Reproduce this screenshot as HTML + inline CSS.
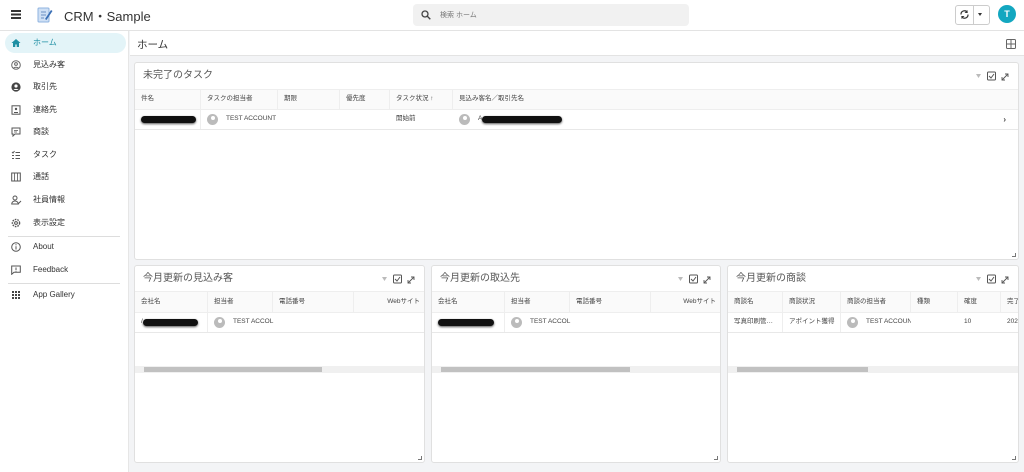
<!DOCTYPE html>
<html><head><meta charset="utf-8"><style>
*{box-sizing:border-box;margin:0;padding:0}
body{width:1024px;height:472px;overflow:hidden;background:#f3f4f6;font-family:"Liberation Sans","Noto Sans CJK JP",sans-serif;color:#333;position:relative}
.abs{position:absolute}
.top{left:0;top:0;width:1024px;height:31px;background:#fff;border-bottom:1px solid #e3e3e3}
.side{left:0;top:31px;width:129px;height:441px;background:#fff;border-right:1px solid #e6e6e6}
.item{position:absolute;left:5px;width:121px;height:20px;font-size:8px;color:#333;line-height:20px;padding-left:28px}
.item svg{position:absolute;left:6px;top:5px}
.sel{background:#e3f4f8;border-radius:10px;color:#1e8fa3}
.card{position:absolute;background:#fff;border:1px solid #e0e0e0;border-radius:3px;overflow:hidden}
.ct{position:absolute;left:8px;top:6px;font-size:10px;color:#555;line-height:14px}
.tools{position:absolute;right:6px;top:8px;width:40px;height:10px}
.hd,.rw{position:absolute;left:0;right:0;font-size:6.5px;color:#444;line-height:1}
.hd{background:#fafafa;border-top:1px solid #eee;border-bottom:1px solid #eee}
.rw{border-bottom:1px solid #e8e8e8}
.c{position:absolute;top:0;height:100%;padding-left:6px;border-right:1px solid #eee;display:flex;align-items:center;white-space:nowrap;overflow:hidden}
.blk{display:inline-block;height:7px;border-radius:4px;background:#111;box-shadow:0 1px 2px #555}
.av{display:inline-block;width:11px;height:11px;border-radius:50%;background:#bbb;margin-right:8px;position:relative;flex:none}
.av::after{content:"";position:absolute;left:3.5px;top:2px;width:4px;height:4px;border-radius:50%;background:#fff}
.sb{position:absolute;left:0;right:0;height:7px;background:#f0f0f0}
.sb i{position:absolute;top:1px;height:5px;background:#c1c1c1}
.rs{position:absolute;right:2px;bottom:2px;width:4px;height:4px;border-right:1px solid #777;border-bottom:1px solid #777}
</style></head><body>
<svg width="0" height="0" style="position:absolute"><defs><g id="tl"><path d="M4 3h5l-2.5 4z" fill="#bbb"/><rect x="15.5" y="1" width="8" height="8" rx="1" fill="none" stroke="#555"/><path d="M17 5l2 2 3-4" fill="none" stroke="#555"/><path d="M30 9l6-6M33 3h3v3M30 6v3h3" fill="none" stroke="#555" stroke-width=".9"/></g></defs></svg>
<div class="abs top">
 <div class="abs" style="left:11px;top:10px;width:10px;height:1.5px;background:#333;box-shadow:0 3.5px 0 #333,0 7px 0 #333"></div>
 <svg class="abs" style="left:37px;top:6px" width="16" height="18" viewBox="0 0 16 18"><rect x="1" y="2" width="11" height="14" rx="1" fill="#cfe0f5" stroke="#8fb3e0"/><path d="M4 6h5M4 9h5M4 12h3" stroke="#6b8fc4"/><path d="M8 13l6-9 1.5 1-6 9z" fill="#3a6fb5"/></svg>
 <div class="abs" style="left:64px;top:6px;font-size:13px;color:#333">CRM・Sample</div>
 <div class="abs" style="left:413px;top:4px;width:276px;height:22px;background:#f1f1f1;border-radius:4px"></div>
 <svg class="abs" style="left:421px;top:10px" width="10" height="10"><circle cx="4" cy="4" r="3" fill="none" stroke="#444" stroke-width="1.3"/><path d="M6.3 6.3l3 3" stroke="#444" stroke-width="1.4"/></svg>
 <div class="abs" style="left:440px;top:10px;font-size:7px;color:#777">検索 ホーム</div>
 <div class="abs" style="left:955px;top:5px;width:35px;height:20px;border:1px solid #ccc;border-radius:3px"></div>
 <div class="abs" style="left:973px;top:5px;width:1px;height:20px;background:#ccc"></div>
 <svg class="abs" style="left:959px;top:9px" width="11" height="11"><path d="M2 5.5A3.5 3.5 0 0 1 8.5 3.5M9 5.5A3.5 3.5 0 0 1 2.5 7.5" fill="none" stroke="#333" stroke-width="1.2"/><path d="M8.5 1v3h-3z M2.5 10v-3h3z" fill="#333"/></svg>
 <div class="abs" style="left:978px;top:13px;border:2.5px solid transparent;border-top:3px solid #333"></div>
 <div class="abs" style="left:998px;top:5px;width:18px;height:18px;border-radius:50%;background:#13a7c0;color:#fff;font-size:9px;font-weight:bold;text-align:center;line-height:18px">T</div>
</div>
<div class="abs side">
 <div class="item sel" style="top:2px"><svg width="10" height="10"><path d="M5 1L0.5 5h1.5v4h2.3V6.5h1.4V9H8V5h1.5z" fill="#1e8fa3"/></svg>ホーム</div>
 <div class="item" style="top:24px"><svg width="10" height="10"><circle cx="5" cy="5" r="4.3" fill="none" stroke="#666"/><circle cx="5" cy="4" r="1.4" fill="none" stroke="#666"/><path d="M2.6 8a3 2 0 0 1 4.8 0" fill="none" stroke="#666"/></svg>見込み客</div>
 <div class="item" style="top:46px"><svg width="10" height="10"><circle cx="5" cy="5" r="4.6" fill="#444"/><circle cx="5" cy="4" r="1.6" fill="#fff"/><path d="M2.4 8a3 2.2 0 0 1 5.2 0z" fill="#fff"/></svg>取引先</div>
 <div class="item" style="top:69px"><svg width="10" height="10"><rect x="1" y="0.8" width="8" height="8.4" fill="none" stroke="#555"/><circle cx="5" cy="4" r="1.2" fill="#555"/><path d="M3 7.5h4" stroke="#555"/></svg>連絡先</div>
 <div class="item" style="top:91px"><svg width="10" height="10"><path d="M1 1h8v6H4L2 9V7H1z" fill="none" stroke="#555"/><path d="M3 3.5h4M3 5h3" stroke="#555" stroke-width=".8"/></svg>商談</div>
 <div class="item" style="top:114px"><svg width="10" height="10"><path d="M1 2l1 1 1.5-2M1 5.5h2M1 8.5h2M4.5 2.5H9M4.5 5.5H9M4.5 8.5H9" fill="none" stroke="#555"/></svg>タスク</div>
 <div class="item" style="top:136px"><svg width="10" height="10"><rect x=".7" y="1" width="8.6" height="8" fill="none" stroke="#555"/><path d="M3.5 1v8M6.5 1v8" stroke="#555" stroke-width=".8"/></svg>通話</div>
 <div class="item" style="top:159px"><svg width="11" height="10"><circle cx="4" cy="3" r="2" fill="none" stroke="#555"/><path d="M0.7 9a3.3 3 0 0 1 6.6 0z" fill="none" stroke="#555"/><path d="M7 9l3-3" stroke="#555"/></svg>社員情報</div>
 <div class="item" style="top:182px"><svg width="10" height="10"><circle cx="5" cy="5" r="3.6" fill="none" stroke="#555" stroke-width="1.4" stroke-dasharray="1.6 1"/><circle cx="5" cy="5" r="1.4" fill="none" stroke="#555"/></svg>表示設定</div>
 <div class="abs" style="left:8px;top:205px;width:112px;height:1px;background:#ddd"></div>
 <div class="item" style="top:206px"><svg width="10" height="10"><circle cx="5" cy="5" r="4.3" fill="none" stroke="#555"/><path d="M5 4.3v3.2" stroke="#555"/><circle cx="5" cy="2.8" r=".6" fill="#555"/></svg>About</div>
 <div class="item" style="top:229px"><svg width="10" height="10"><path d="M.7 1h8.6v6.3H3L.7 9.3z" fill="none" stroke="#555"/><path d="M5 2.5v2.5M5 5.7v.8" stroke="#555"/></svg>Feedback</div>
 <div class="abs" style="left:8px;top:252px;width:112px;height:1px;background:#ddd"></div>
 <div class="item" style="top:254px"><svg width="10" height="10"><g fill="#444"><rect x="1" y="1" width="2" height="2"/><rect x="4" y="1" width="2" height="2"/><rect x="7" y="1" width="2" height="2"/><rect x="1" y="4" width="2" height="2"/><rect x="4" y="4" width="2" height="2"/><rect x="7" y="4" width="2" height="2"/><rect x="1" y="7" width="2" height="2"/><rect x="4" y="7" width="2" height="2"/><rect x="7" y="7" width="2" height="2"/></g></svg>App Gallery</div>
</div>
<div class="abs" style="left:130px;top:31px;width:894px;height:25px;background:#fff;border-bottom:1px solid #e3e3e3">
 <div class="abs" style="left:7px;top:6px;font-size:10.5px;color:#333">ホーム</div>
 <svg class="abs" style="left:876px;top:8px" width="10" height="10"><rect x=".5" y=".5" width="9" height="9" rx="1" fill="none" stroke="#666"/><path d="M5 .5v9M.5 5h9" stroke="#666"/></svg>
</div>

<div class="card" style="left:134px;top:62px;width:885px;height:198px">
 <div class="ct">未完了のタスク</div>
 <svg class="tools"><use href="#tl"/></svg>
 <div class="hd" style="top:26px;height:21px">
  <div class="c" style="left:0;width:66px">件名</div><div class="c" style="left:66px;width:77px">タスクの担当者</div><div class="c" style="left:143px;width:62px">期限</div><div class="c" style="left:205px;width:50px">優先度</div><div class="c" style="left:255px;width:63px">タスク状況 ↑</div><div class="c" style="left:318px;width:567px;border:0">見込み客名／取引先名</div>
 </div>
 <div class="rw" style="top:47px;height:20px">
  <div class="c" style="left:0;width:66px"><span class="blk" style="width:55px"></span></div>
  <div class="c" style="left:66px;width:77px;border:0"><span class="av"></span>TEST ACCOUNT</div>
  <div class="c" style="left:255px;width:63px;border:0">開始前</div>
  <div class="c" style="left:318px;width:300px;border:0"><span class="av"></span>A<span class="blk" style="width:80px"></span></div>
  <div class="abs" style="right:12px;top:6px;font-size:8px;font-weight:bold">›</div>
 </div>
 <div class="rs"></div>
</div>

<div class="card" style="left:134px;top:265px;width:291px;height:198px">
 <div class="ct">今月更新の見込み客</div><svg class="tools"><use href="#tl"/></svg>
 <div class="hd" style="top:25px;height:22px"><div class="c" style="left:0;width:73px">会社名</div><div class="c" style="left:73px;width:65px">担当者</div><div class="c" style="left:138px;width:81px">電話番号</div><div class="c" style="left:219px;width:72px;border:0;justify-content:flex-end;padding-right:6px">Webサイト</div></div>
 <div class="rw" style="top:47px;height:20px"><div class="c" style="left:0;width:73px">/<span class="blk" style="width:55px"></span></div><div class="c" style="left:73px;width:120px;border:0"><span class="av"></span>TEST ACCOL</div></div>
 <div class="sb" style="top:100px"><i style="left:9px;width:178px"></i></div>
 <div class="rs"></div>
</div>
<div class="card" style="left:431px;top:265px;width:290px;height:198px">
 <div class="ct">今月更新の取込先</div><svg class="tools"><use href="#tl"/></svg>
 <div class="hd" style="top:25px;height:22px"><div class="c" style="left:0;width:73px">会社名</div><div class="c" style="left:73px;width:65px">担当者</div><div class="c" style="left:138px;width:81px">電話番号</div><div class="c" style="left:219px;width:71px;border:0;justify-content:flex-end;padding-right:6px">Webサイト</div></div>
 <div class="rw" style="top:47px;height:20px"><div class="c" style="left:0;width:73px"><span class="blk" style="width:56px"></span></div><div class="c" style="left:73px;width:120px;border:0"><span class="av"></span>TEST ACCOL</div></div>
 <div class="sb" style="top:100px"><i style="left:9px;width:189px"></i></div>
 <div class="rs"></div>
</div>
<div class="card" style="left:727px;top:265px;width:292px;height:198px">
 <div class="ct">今月更新の商談</div><svg class="tools"><use href="#tl"/></svg>
 <div class="hd" style="top:25px;height:22px"><div class="c" style="left:0;width:55px">商談名</div><div class="c" style="left:55px;width:58px">商談状況</div><div class="c" style="left:113px;width:70px">商談の担当者</div><div class="c" style="left:183px;width:47px">種類</div><div class="c" style="left:230px;width:43px">確度</div><div class="c" style="left:273px;width:30px;border:0">完了</div></div>
 <div class="rw" style="top:47px;height:20px"><div class="c" style="left:0;width:55px">写真印刷管…</div><div class="c" style="left:55px;width:58px">アポイント獲得</div><div class="c" style="left:113px;width:70px;border:0"><span class="av"></span>TEST ACCOUN</div><div class="c" style="left:230px;width:43px;border:0">10</div><div class="c" style="left:273px;width:30px;border:0">202</div></div>
 <div class="sb" style="top:100px"><i style="left:9px;width:131px"></i></div>
 <div class="rs"></div>
</div>
</body></html>
